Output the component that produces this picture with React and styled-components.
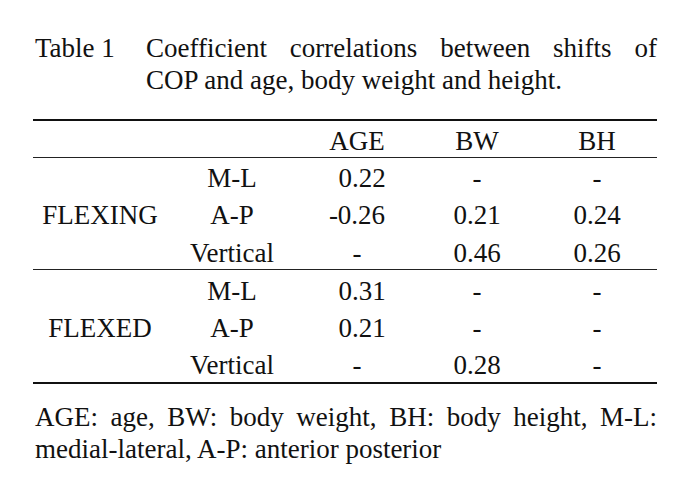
import styled, { createGlobalStyle } from 'styled-components'

const GlobalStyle = createGlobalStyle`
  html, body {
    margin: 0;
    background: #fff;
  }
  body {
    font-family: "Liberation Serif", "DejaVu Serif", serif;
    color: #111;
  }
`

const Page = styled.div`
  width: 624px;
  padding: 32px 0 0 33px;
  font-size: 27px;
  line-height: 32px;
`

const Caption = styled.div`
  display: flex;
  margin-bottom: 23px;
`

const CaptionLabel = styled.div`
  flex: 0 0 113px;
  padding-left: 2px;
  box-sizing: border-box;
  white-space: nowrap;
`

const CaptionText = styled.div`
  flex: 1;
`

// the source breaks the caption after "of" and spreads the first line
const CaptionLine = styled.div`
  white-space: nowrap;
  text-align: ${p => (p.$justify ? 'justify' : 'left')};
  text-align-last: ${p => (p.$justify ? 'justify' : 'auto')};
`

const Table = styled.table`
  width: 624px;
  border-collapse: collapse;
  table-layout: fixed;
  border-top: 2px solid #111;
  border-bottom: 2px solid #111;
`

const HeadRow = styled.tr`
  height: 37px;
  border-bottom: 1.5px solid #222;
`

const Row = styled.tr`
  height: 37.6px;
  border-top: ${p => (p.$first ? '1.5px solid #222' : 'none')};
`

const Cell = styled.td`
  padding: 4px 0 0;
  line-height: 30px;
  text-align: center;
  vertical-align: middle;
  white-space: nowrap;
  font-weight: normal;
  padding-left: ${p => (p.$shift ? '10px' : '0')};
`

const HeadCell = styled(Cell).attrs({ as: 'th' })`
  padding-top: 4px;
`

const Note = styled.p`
  margin: 17px 0 0;
  padding-left: 2px;
  text-align: justify;
`

const groups = [
  {
    name: 'FLEXING',
    rows: [
      ['M-L', '0.22', '-', '-'],
      ['A-P', '-0.26', '0.21', '0.24'],
      ['Vertical', '-', '0.46', '0.26'],
    ],
  },
  {
    name: 'FLEXED',
    rows: [
      ['M-L', '0.31', '-', '-'],
      ['A-P', '0.21', '-', '-'],
      ['Vertical', '-', '0.28', '-'],
    ],
  },
]

// positive AGE values sit a little right of the column centre in the original
const isShifted = (v, col) => col === 1 && v !== '-' && !v.startsWith('-')

export default function App() {
  return (
    <Page>
      <GlobalStyle />
      <Caption>
        <CaptionLabel>Table 1</CaptionLabel>
        <CaptionText>
          <CaptionLine $justify>Coefficient correlations between shifts of</CaptionLine>
          <CaptionLine>COP and age, body weight and height.</CaptionLine>
        </CaptionText>
      </Caption>
      <Table>
        <colgroup>
          <col style={{ width: 134 }} />
          <col style={{ width: 130 }} />
          <col style={{ width: 120 }} />
          <col style={{ width: 120 }} />
          <col style={{ width: 120 }} />
        </colgroup>
        <thead>
          <HeadRow>
            <HeadCell />
            <HeadCell />
            <HeadCell>AGE</HeadCell>
            <HeadCell>BW</HeadCell>
            <HeadCell>BH</HeadCell>
          </HeadRow>
        </thead>
        {groups.map(g => (
          <tbody key={g.name}>
            {g.rows.map((r, i) => (
              <Row key={r[0]} $first={i === 0}>
                {i === 0 && <Cell rowSpan={3}>{g.name}</Cell>}
                {r.map((v, j) => (
                  <Cell key={j} $shift={isShifted(v, j)}>{v}</Cell>
                ))}
              </Row>
            ))}
          </tbody>
        ))}
      </Table>
      <Note>
        AGE: age, BW: body weight, BH: body height, M-L: medial-lateral, A-P: anterior posterior
      </Note>
    </Page>
  )
}
